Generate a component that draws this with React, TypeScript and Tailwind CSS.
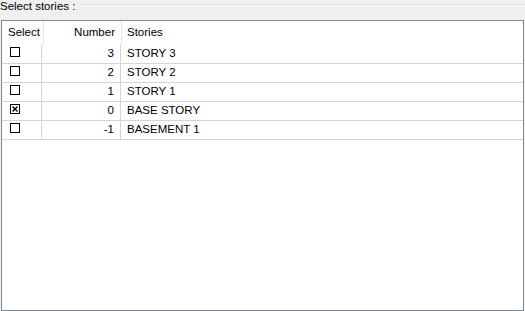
const STORIES = [
  { checked: false, number: 3, name: 'STORY 3' },
  { checked: false, number: 2, name: 'STORY 2' },
  { checked: false, number: 1, name: 'STORY 1' },
  { checked: true, number: 0, name: 'BASE STORY' },
  { checked: false, number: -1, name: 'BASEMENT 1' },
];

function CheckBox({ checked }: { checked: boolean }) {
  return (
    <svg width="10" height="10" viewBox="0 0 10 10" className="block">
      <rect x="0.5" y="0.5" width="9" height="9" fill="white" stroke="black" />
      {checked && (
        <path d="M2.5 2.5 L7.5 7.5 M7.5 2.5 L2.5 7.5" stroke="black" strokeWidth="1.4" />
      )}
    </svg>
  );
}

export default function App() {
  return (
    <div
      className="w-[525px] h-[311px] bg-[#f0f0f0] text-[11.5px] text-black overflow-hidden"
      style={{ fontFamily: '"Liberation Sans", Arial, sans-serif' }}
    >
      {/* group box caption */}
      <div className="flex items-start h-[20px]">
        <span className="leading-[10px] pt-[1px] pr-[5px] whitespace-nowrap">Select stories :</span>
        <div className="flex-1 mt-[4px] border-t border-[#dcdcdc] border-b-white border-b h-[2px]" />
      </div>

      {/* list */}
      <div className="ml-[1px] w-[523px] h-[291px] bg-white border border-[#828790]">
        <div className="flex h-[24px] items-center">
          <div className="w-[42px] pl-[6px] border-r border-[#e5e5e5] h-full flex items-center">Select</div>
          <div className="w-[78px] pr-[6px] border-r border-[#e5e5e5] h-full flex items-center justify-end">Number</div>
          <div className="pl-[5px] h-full flex items-center">Stories</div>
        </div>
        <div>
          {STORIES.map((s) => (
            <div key={s.number} className="flex h-[19px] border-b border-[#d4d4d4] w-[521px]">
              <div className="w-[40px] pl-[8px] pt-[2px] border-r border-[#d4d4d4]">
                <CheckBox checked={s.checked} />
              </div>
              <div className="w-[79px] pr-[6px] border-r border-[#d4d4d4] flex items-center justify-end">
                {s.number}
              </div>
              <div className="pl-[6px] flex items-center">{s.name}</div>
            </div>
          ))}
        </div>
      </div>
    </div>
  );
}
